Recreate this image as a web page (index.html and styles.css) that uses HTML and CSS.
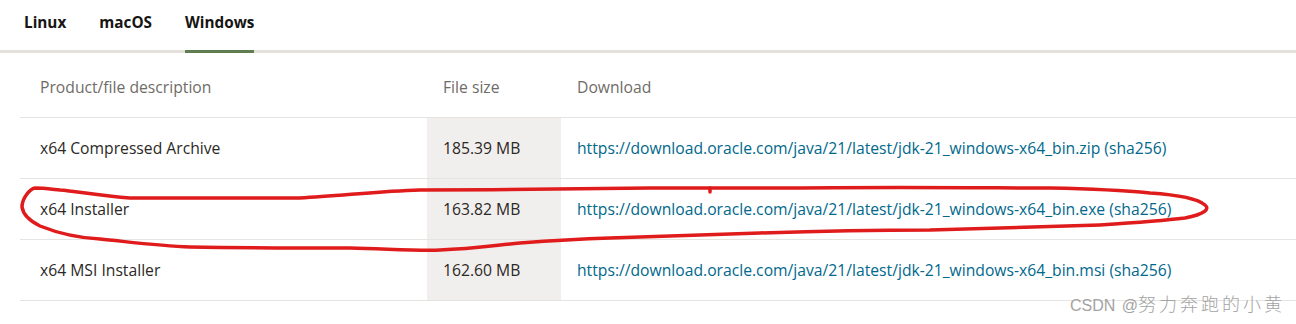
FILE: index.html
```html
<!DOCTYPE html>
<html lang="en">
<head>
    <meta charset="UTF-8">
    <title>Java Downloads</title>
    <link rel="stylesheet" href="styles.css">
</head>
<body>
    <div class="tabs">
        <a class="tab">Linux</a>
        <a class="tab">macOS</a>
        <a class="tab active">Windows</a>
    </div>

    <table class="downloads">
        <thead>
            <tr>
                <th class="col-desc">Product/file description</th>
                <th class="col-size">File size</th>
                <th class="col-link">Download</th>
            </tr>
        </thead>
        <tbody>
            <tr>
                <td class="col-desc">x64 Compressed Archive</td>
                <td class="col-size">185.39 MB</td>
                <td class="col-link"><a href="#">https://download.oracle.com/java/21/latest/jdk-21_windows-x64_bin.zip</a> (<a href="#">sha256</a>)</td>
            </tr>
            <tr>
                <td class="col-desc">x64 Installer</td>
                <td class="col-size">163.82 MB</td>
                <td class="col-link"><a href="#">https://download.oracle.com/java/21/latest/jdk-21_windows-x64_bin.exe</a> (<a href="#">sha256</a>)</td>
            </tr>
            <tr>
                <td class="col-desc">x64 MSI Installer</td>
                <td class="col-size">162.60 MB</td>
                <td class="col-link"><a href="#">https://download.oracle.com/java/21/latest/jdk-21_windows-x64_bin.msi</a> (<a href="#">sha256</a>)</td>
            </tr>
        </tbody>
    </table>

    <!-- hand drawn marker around the installer row -->
    <svg class="marker" width="1296" height="324" viewBox="0 0 1296 324">
        <path d="M35 188 C30 189 22 198 22 207 C23 214 28 220 40 226 C60 234 80 238 100 239 C130 242 160 246 190 247 C250 248 300 248 350 248 C390 249 420 251 440 250 C470 249 490 246 520 243 C560 240 580 239 610 238 C680 236 720 234 760 233 C820 231 880 230 930 230 C1000 228 1050 227 1100 225 C1130 223 1160 221 1185 218 C1205 214 1210 209 1205 205 C1198 199 1180 195 1150 193 C1120 190 1100 189 1050 188 C1000 188 900 187 800 188 C740 188 700 188 650 188 C600 189 500 190 420 190 C380 191 340 196 300 198 C250 198 200 198 130 198 C100 196 75 191 60 190 C50 189 42 188 35 188 Z" />
        <path d="M710 188 L710 192" />
    </svg>

    <div class="watermark"><span class="wm-latin">CSDN @</span><span class="wm-cjk">努力奔跑的小黄</span></div>
</body>
</html>
```

FILE: styles.css
```css
:root {
    --text-color: #161513;
    --body-text: #2b2825;
    --muted-color: #6f6c68;
    --link-color: #00688c;
    --line-color: #e4e1dc;
    --row-line: #e6e4e1;
    --shade-color: #f1efed;
    --accent-green: #5f7d4f;
    --body-font: 'Open Sans', 'Noto Sans', sans-serif;
}

body {
    margin: 0;
    padding: 0;
    font-family: var(--body-font);
    color: var(--text-color);
    background: #fff;
    position: relative;
    width: 1296px;
    height: 324px;
    overflow: hidden;
}

.tabs {
    display: flex;
    gap: 33px;
    padding-left: 24px;
    border-bottom: 3px solid var(--line-color);
    height: 50px;
}

.tab {
    font-size: 15.3px;
    font-weight: 700;
    line-height: 20px;
    padding-top: 12px;
    color: var(--text-color);
    text-decoration: none;
    height: 38px;
    border-bottom: 3px solid transparent;
}

.tab.active {
    border-bottom-color: var(--accent-green);
}

.downloads {
    margin-left: 20px;
    width: 1276px;
    border-collapse: collapse;
    font-size: 15.7px;
    color: var(--body-text);
}

.downloads th {
    font-weight: 400;
    color: var(--muted-color);
    text-align: left;
    height: 64px;
    padding: 5px 16px 0;
    box-sizing: border-box;
    border-bottom: 1px solid var(--row-line);
}

.downloads td {
    height: 60px;
    padding: 0 16px;
    border-bottom: 1px solid var(--row-line);
}

.downloads .col-desc {
    width: 371px;
    padding-left: 20px;
}

.downloads .col-size {
    width: 102px;
}

.downloads td.col-size {
    background: var(--shade-color);
}

.col-link {
    color: var(--link-color);
}

.col-link a {
    color: var(--link-color);
    text-decoration: none;
}

.marker {
    position: absolute;
    top: 0;
    left: 0;
    pointer-events: none;
}

.marker path {
    fill: none;
    stroke: #e01b1b;
    stroke-width: 3.5;
    stroke-linecap: round;
    stroke-linejoin: round;
}

.watermark {
    position: absolute;
    left: 1070px;
    top: 291px;
    font-family: 'Liberation Sans', 'Noto Sans CJK SC', sans-serif;
    line-height: 24px;
    color: #a3a3a3;
    pointer-events: none;
    white-space: nowrap;
}

.wm-latin {
    font-size: 16px;
    word-spacing: 2px;
}

.wm-cjk {
    font-family: 'Noto Sans CJK SC', sans-serif;
    font-size: 18px;
    font-weight: 300;
    letter-spacing: 3px;
}
```
